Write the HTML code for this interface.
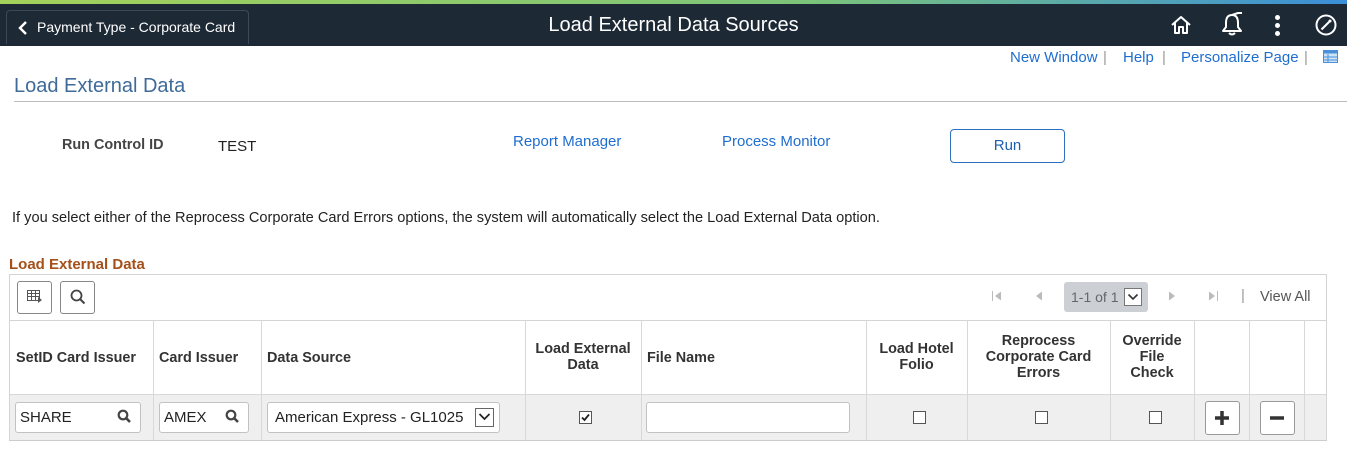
<!DOCTYPE html>
<html><head><meta charset="utf-8">
<style>
*{box-sizing:border-box;margin:0;padding:0}
body{width:1347px;height:449px;position:relative;background:#fff;font-family:"Liberation Sans",Arial,sans-serif;overflow:hidden;color:#333}
.a{position:absolute;white-space:nowrap}
.lnk{color:#1f6ecf;font-size:15px}
.th{font-weight:bold;font-size:14.4px;color:#333;line-height:16px}
.inp{position:absolute;background:#fff;border:1px solid #c2c2c2;border-radius:3px;height:31px;font-size:15px;color:#222;line-height:29px;padding-left:4px}
.cb{position:absolute;width:13px;height:13px;border:1px solid #555;background:#fff}
.vl{position:absolute;top:320px;height:120px;width:1px;background:#d8d8d8}
</style></head><body>
<div class="a" style="left:0;top:0;width:1347px;height:4px;background:linear-gradient(90deg,#a4d15a,#7cc47a 60%,#3a8fd8)"></div>
<div class="a" style="left:0;top:4px;width:1347px;height:42px;background:#1e2936"></div>
<div class="a" style="left:6px;top:10px;width:243px;height:34px;border:1px solid #3d4957;border-bottom:none;border-radius:4px 4px 0 0"></div>
<svg class="a" style="left:17px;top:20px" width="12" height="16"><path d="M9 2 L3 8 L9 14" stroke="#fff" stroke-width="2.4" fill="none"/></svg>
<div class="a" style="left:37px;top:19px;color:#fff;font-size:14px">Payment Type - Corporate Card</div>
<div class="a" style="left:0;width:1347px;top:14px;text-align:center;color:#fff;font-size:20px">Load External Data Sources</div>
<svg class="a" style="left:1169px;top:13px" width="24" height="24"><path d="M3 12 L12 4 L21 12 M6 10 V20 H10 V14 H14 V20 H18 V10" stroke="#fff" stroke-width="2" fill="none" stroke-linejoin="round"/></svg>
<svg class="a" style="left:1220px;top:10px" width="24" height="28"><path d="M12 5 C7 5 6 9 6 13 V17 L3 21 H21 L18 17 V13 C18 9 17 5 12 5 Z M9 23 Q12 26 15 23 M12 5 L18 3 H22" stroke="#fff" stroke-width="2" fill="none" stroke-linejoin="round"/></svg>
<div class="a" style="left:1275px;top:15px;width:5px;height:5px;border-radius:50%;background:#fff;box-shadow:0 8px 0 #fff,0 16px 0 #fff"></div>
<svg class="a" style="left:1314px;top:13px" width="24" height="24"><circle cx="12" cy="12" r="9.5" stroke="#fff" stroke-width="2" fill="none"/><path d="M16.5 7.5 L7.5 16.5" stroke="#fff" stroke-width="2"/><circle cx="16" cy="8" r="1.5" fill="#fff"/></svg>

<div class="a lnk" style="left:1010px;top:49px">New Window</div>
<div class="a" style="left:1103px;top:49px;color:#999;font-size:15px">|</div>
<div class="a lnk" style="left:1123px;top:49px">Help</div>
<div class="a" style="left:1162px;top:49px;color:#999;font-size:15px">|</div>
<div class="a lnk" style="left:1181px;top:49px">Personalize Page</div>
<div class="a" style="left:1304px;top:49px;color:#999;font-size:15px">|</div>
<svg class="a" style="left:1323px;top:50px" width="15" height="13"><rect x="0.5" y="0.5" width="14" height="12" fill="#cfe3f7" stroke="#4a90d9"/><rect x="0.5" y="0.5" width="14" height="3" fill="#4a90d9"/><path d="M1 7 H14 M1 10 H14 M5 4 V12" stroke="#4a90d9"/></svg>

<div class="a" style="left:14px;top:75px;font-size:20px;color:#3f6a99">Load External Data</div>
<div class="a" style="left:14px;top:101px;width:1333px;height:1px;background:#bbb"></div>

<div class="a" style="left:62px;top:137px;font-size:14.4px;font-weight:bold;color:#444">Run Control ID</div>
<div class="a" style="left:218px;top:138px;font-size:15px;color:#222">TEST</div>
<div class="a lnk" style="left:513px;top:133px">Report Manager</div>
<div class="a lnk" style="left:722px;top:133px">Process Monitor</div>
<div class="a" style="left:950px;top:129px;width:115px;height:34px;border:1px solid #2e6fbf;border-radius:4px;color:#1f5fb0;font-size:15px;text-align:center;line-height:32px">Run</div>

<div class="a" style="left:12px;top:210px;font-size:14.6px;color:#222">If you select either of the Reprocess Corporate Card Errors options, the system will automatically select the Load External Data option.</div>
<div class="a" style="left:9px;top:256px;font-size:15px;font-weight:bold;color:#a5501a">Load External Data</div>

<div class="a" style="left:9px;top:274px;width:1318px;height:167px;border:1px solid #d4d4d4;border-bottom:2px solid #ccc"></div>
<div class="a" style="left:10px;top:320px;width:1316px;height:1px;background:#d4d4d4"></div>
<div class="a" style="left:10px;top:394px;width:1316px;height:46px;background:#efefef;border-top:1px solid #d8d8d8"></div>
<div class="vl" style="left:153px"></div><div class="vl" style="left:261px"></div><div class="vl" style="left:525px"></div><div class="vl" style="left:641px"></div><div class="vl" style="left:866px"></div><div class="vl" style="left:967px"></div><div class="vl" style="left:1110px"></div><div class="vl" style="left:1194px"></div><div class="vl" style="left:1249px"></div><div class="vl" style="left:1304px"></div>

<div class="a" style="left:17px;top:281px;width:35px;height:33px;border:1px solid #888;border-radius:3px"></div>
<svg class="a" style="left:27px;top:290px" width="16" height="14"><rect x="0.5" y="0.5" width="12" height="10" fill="none" stroke="#555"/><path d="M1 3.5H12M1 6.5H12M4.5 1V10M8.5 1V10" stroke="#555"/><path d="M11 7 L15 10 L11 13Z" fill="#555"/></svg>
<div class="a" style="left:60px;top:281px;width:35px;height:33px;border:1px solid #888;border-radius:3px"></div>
<svg class="a" style="left:70px;top:289px" width="16" height="16"><circle cx="6.5" cy="6.5" r="5" stroke="#444" stroke-width="1.8" fill="none"/><path d="M10 10 L14.5 14.5" stroke="#444" stroke-width="2"/></svg>

<svg class="a" style="left:991px;top:290px" width="12" height="12"><path d="M1.5 1V11" stroke="#bbb"/><path d="M10 1.5 L4 6 L10 10.5Z" fill="#bbb"/></svg>
<svg class="a" style="left:1033px;top:290px" width="10" height="12"><path d="M9 1.5 L3 6 L9 10.5Z" fill="#bbb"/></svg>
<div class="a" style="left:1064px;top:282px;width:84px;height:30px;background:#ccd0d5;border-radius:3px"></div>
<div class="a" style="left:1071px;top:289px;font-size:14px;color:#666">1-1 of 1</div>
<div class="a" style="left:1124px;top:288px;width:18px;height:18px;border:1px solid #777;background:#fff"></div>
<svg class="a" style="left:1127px;top:292px" width="12" height="10"><path d="M1.5 2.5 L6 7 L10.5 2.5" stroke="#333" stroke-width="1.6" fill="none"/></svg>
<svg class="a" style="left:1168px;top:290px" width="10" height="12"><path d="M1 1.5 L7 6 L1 10.5Z" fill="#bbb"/></svg>
<svg class="a" style="left:1208px;top:290px" width="12" height="12"><path d="M1 1.5 L7 6 L1 10.5Z" fill="#bbb"/><path d="M9.5 1V11" stroke="#bbb"/></svg>
<div class="a" style="left:1241px;top:287px;color:#999;font-size:15px">|</div>
<div class="a" style="left:1260px;top:289px;font-size:14.5px;color:#555">View All</div>

<div class="a th" style="left:16px;top:350px">SetID Card Issuer</div>
<div class="a th" style="left:159px;top:350px">Card Issuer</div>
<div class="a th" style="left:267px;top:350px">Data Source</div>
<div class="a th" style="left:525px;width:116px;top:341px;text-align:center;white-space:normal">Load External<br>Data</div>
<div class="a th" style="left:647px;top:350px">File Name</div>
<div class="a th" style="left:866px;width:101px;top:341px;text-align:center">Load Hotel<br>Folio</div>
<div class="a th" style="left:967px;width:143px;top:333px;text-align:center">Reprocess<br>Corporate Card<br>Errors</div>
<div class="a th" style="left:1110px;width:84px;top:333px;text-align:center">Override<br>File<br>Check</div>

<div class="inp" style="left:15px;top:402px;width:126px">SHARE</div>
<svg class="a" style="left:117px;top:409px" width="15" height="15"><circle cx="6" cy="6" r="4.3" stroke="#444" stroke-width="2.2" fill="none"/><path d="M9 9 L13 13" stroke="#444" stroke-width="2.6"/></svg>
<div class="inp" style="left:159px;top:402px;width:90px">AMEX</div>
<svg class="a" style="left:225px;top:409px" width="15" height="15"><circle cx="6" cy="6" r="4.3" stroke="#444" stroke-width="2.2" fill="none"/><path d="M9 9 L13 13" stroke="#444" stroke-width="2.6"/></svg>
<div class="inp" style="left:267px;top:402px;width:233px;padding-left:7px">American Express - GL1025</div>
<div class="a" style="left:475px;top:408px;width:19px;height:19px;border:1px solid #666;background:#fff"></div>
<svg class="a" style="left:478px;top:412px" width="13" height="10"><path d="M1.5 2 L6.5 7 L11.5 2" stroke="#222" stroke-width="1.7" fill="none"/></svg>
<div class="cb" style="left:579px;top:411px"></div>
<svg class="a" style="left:580px;top:412px" width="11" height="11"><path d="M2 5.5 L4.5 8 L9 2.5" stroke="#222" stroke-width="1.8" fill="none"/></svg>
<div class="inp" style="left:646px;top:402px;width:204px"></div>
<div class="cb" style="left:913px;top:411px"></div>
<div class="cb" style="left:1035px;top:411px"></div>
<div class="cb" style="left:1149px;top:411px"></div>
<div class="a" style="left:1205px;top:401px;width:35px;height:34px;border:1px solid #999;border-radius:3px;background:#fff"></div>
<svg class="a" style="left:1213px;top:409px" width="18" height="18"><path d="M9 2V16M2 9H16" stroke="#333" stroke-width="3.5"/></svg>
<div class="a" style="left:1260px;top:401px;width:35px;height:34px;border:1px solid #999;border-radius:3px;background:#fff"></div>
<svg class="a" style="left:1268px;top:409px" width="18" height="18"><path d="M2 9H16" stroke="#333" stroke-width="3.5"/></svg>
</body></html>
